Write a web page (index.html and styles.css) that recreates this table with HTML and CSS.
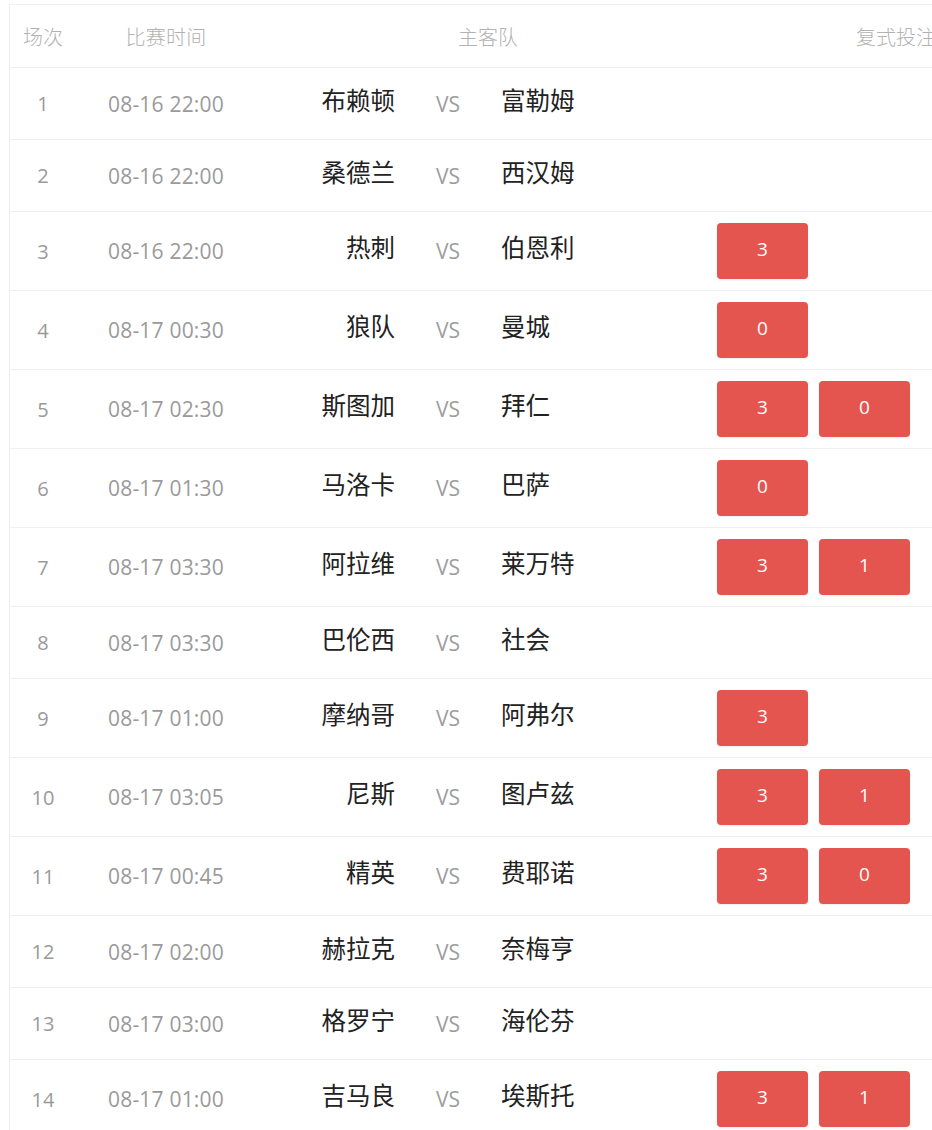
FILE: index.html
```html
<!DOCTYPE html>
<html lang="zh">
<head>
<meta charset="utf-8">
<title>复式投注</title>
<link rel="stylesheet" href="styles.css">
</head>
<body>
<div class="table">
  <div class="row head">
    <div class="c-no">场次</div>
    <div class="c-time">比赛时间</div>
    <div class="c-teams">主客队</div>
    <div class="c-bet">复式投注</div>
  </div>

  <div class="row"><div class="c-no">1</div><div class="c-time">08-16 22:00</div><div class="home">布赖顿</div><div class="vs">VS</div><div class="away">富勒姆</div><div class="bets"></div></div>
  <div class="row"><div class="c-no">2</div><div class="c-time">08-16 22:00</div><div class="home">桑德兰</div><div class="vs">VS</div><div class="away">西汉姆</div><div class="bets"></div></div>
  <div class="row has-bet"><div class="c-no">3</div><div class="c-time">08-16 22:00</div><div class="home">热刺</div><div class="vs">VS</div><div class="away">伯恩利</div><div class="bets"><span class="btn">3</span></div></div>
  <div class="row has-bet"><div class="c-no">4</div><div class="c-time">08-17 00:30</div><div class="home">狼队</div><div class="vs">VS</div><div class="away">曼城</div><div class="bets"><span class="btn">0</span></div></div>
  <div class="row has-bet"><div class="c-no">5</div><div class="c-time">08-17 02:30</div><div class="home">斯图加</div><div class="vs">VS</div><div class="away">拜仁</div><div class="bets"><span class="btn">3</span><span class="btn">0</span></div></div>
  <div class="row has-bet"><div class="c-no">6</div><div class="c-time">08-17 01:30</div><div class="home">马洛卡</div><div class="vs">VS</div><div class="away">巴萨</div><div class="bets"><span class="btn">0</span></div></div>
  <div class="row has-bet"><div class="c-no">7</div><div class="c-time">08-17 03:30</div><div class="home">阿拉维</div><div class="vs">VS</div><div class="away">莱万特</div><div class="bets"><span class="btn">3</span><span class="btn">1</span></div></div>
  <div class="row"><div class="c-no">8</div><div class="c-time">08-17 03:30</div><div class="home">巴伦西</div><div class="vs">VS</div><div class="away">社会</div><div class="bets"></div></div>
  <div class="row has-bet"><div class="c-no">9</div><div class="c-time">08-17 01:00</div><div class="home">摩纳哥</div><div class="vs">VS</div><div class="away">阿弗尔</div><div class="bets"><span class="btn">3</span></div></div>
  <div class="row has-bet"><div class="c-no">10</div><div class="c-time">08-17 03:05</div><div class="home">尼斯</div><div class="vs">VS</div><div class="away">图卢兹</div><div class="bets"><span class="btn">3</span><span class="btn">1</span></div></div>
  <div class="row has-bet"><div class="c-no">11</div><div class="c-time">08-17 00:45</div><div class="home">精英</div><div class="vs">VS</div><div class="away">费耶诺</div><div class="bets"><span class="btn">3</span><span class="btn">0</span></div></div>
  <div class="row"><div class="c-no">12</div><div class="c-time">08-17 02:00</div><div class="home">赫拉克</div><div class="vs">VS</div><div class="away">奈梅亨</div><div class="bets"></div></div>
  <div class="row"><div class="c-no">13</div><div class="c-time">08-17 03:00</div><div class="home">格罗宁</div><div class="vs">VS</div><div class="away">海伦芬</div><div class="bets"></div></div>
  <div class="row has-bet"><div class="c-no">14</div><div class="c-time">08-17 01:00</div><div class="home">吉马良</div><div class="vs">VS</div><div class="away">埃斯托</div><div class="bets"><span class="btn">3</span><span class="btn">1</span></div></div>
</div>
</body>
</html>
```

FILE: styles.css
```css
html, body {
  margin: 0;
  padding: 0;
  background: #ffffff;
  overflow: hidden;
}

body {
  font-family: "Open Sans", "Noto Sans CJK SC", sans-serif;
  padding: 4px 0 0 9px;
}

.table {
  width: 1070px;
  background: #fff;
  border-top: 1px solid #efefef;
  border-left: 1px solid #efefef;
}

.row {
  display: grid;
  grid-template-columns: 66px 180px 149px 86px 219px 370px;
  align-items: center;
  height: 71px;
  border-bottom: 1px solid #efefef;
}

.row.has-bet {
  height: 78px;
}

.row.head {
  height: 62px;
  grid-template-columns: 66px 180px 464px 370px;
}

.head > div {
  font-family: "Noto Sans CJK SC", sans-serif;
  font-size: 20px;
  color: #b2b2b2;
  text-align: center;
  font-weight: 300;
}

.head .c-bet {
  text-align: left;
  padding-left: 136px;
  white-space: nowrap;
}

.c-no {
  text-align: center;
  font-size: 20px;
  color: #9a9a9a;
}

.c-time {
  text-align: center;
  font-size: 21px;
  color: #9a9a9a;
  letter-spacing: 0.2px;
  white-space: nowrap;
}

.home, .away {
  font-family: "Noto Sans CJK SC", sans-serif;
  font-size: 24.5px;
  color: #222;
  line-height: 1;
  padding-bottom: 7px;
}

.home {
  text-align: right;
  padding-right: 10px;
}

.away {
  text-align: left;
  padding-left: 10px;
}

.vs {
  text-align: center;
  font-size: 21px;
  color: #9d9d9d;
}

.bets {
  display: flex;
  gap: 11px;
  padding-left: 7px;
}

.btn {
  display: flex;
  align-items: center;
  justify-content: center;
  width: 91px;
  height: 56px;
  padding-bottom: 4px;
  box-sizing: border-box;
  background: #e5554f;
  border-radius: 4px;
  color: #fff;
  font-size: 19px;
  box-shadow: 0 1px 2px rgba(0,0,0,0.08);
}
```
